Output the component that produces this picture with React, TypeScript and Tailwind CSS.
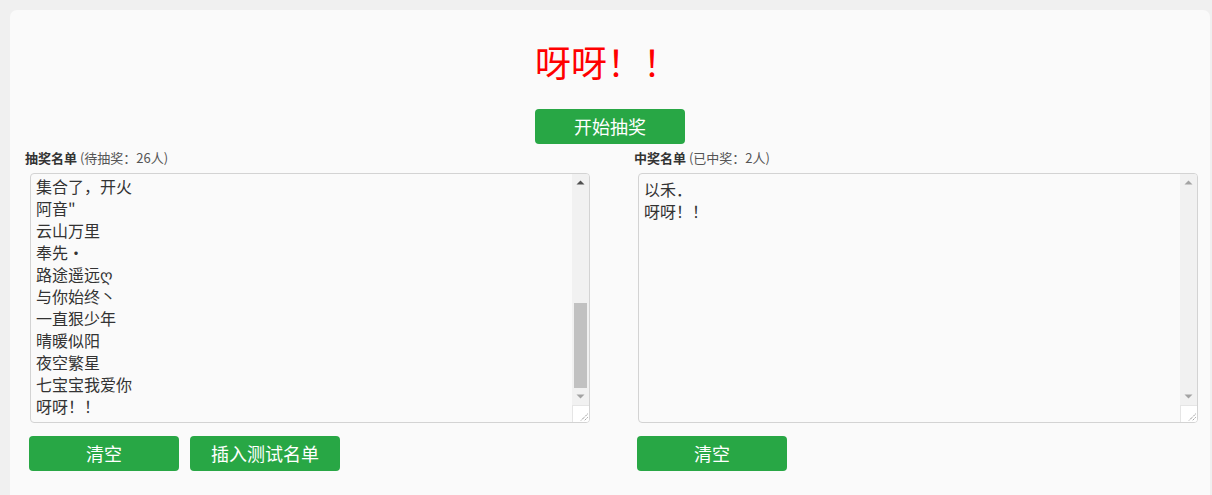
import React from "react";

const FONT = { fontFamily: '"Noto Sans CJK SC", "Noto Sans", sans-serif' };

const pool = [
  "集合了，开火",
  '阿音"',
  "云山万里",
  "奉先·",
  "路途遥远ღ",
  "与你始终丶",
  "一直狠少年",
  "晴暖似阳",
  "夜空繁星",
  "七宝宝我爱你",
  "呀呀！！",
];

const winners = ["以禾．", "呀呀！！"];

function Arrow({ up, dark }: { up: boolean; dark: boolean }) {
  return (
    <div className="h-[17px] flex items-center justify-center">
      <svg width="9" height="5" viewBox="0 0 9 5">
        {up ? (
          <polygon points="0.5,4.5 8.5,4.5 4.5,0.5" fill={dark ? "#505050" : "#a3a3a3"} />
        ) : (
          <polygon points="0.5,0.5 8.5,0.5 4.5,4.5" fill={dark ? "#505050" : "#a3a3a3"} />
        )}
      </svg>
    </div>
  );
}

function Resizer() {
  return (
    <div className="h-[17px] w-[17px] bg-white border-l border-t border-[#e5e5e5] relative">
      <svg width="17" height="17" viewBox="0 0 17 17" className="absolute -left-px -top-px">
        <line x1="15.5" y1="9" x2="9" y2="15.5" stroke="#6b6b6b" strokeWidth="1" strokeDasharray="1 1" />
        <line x1="15.5" y1="12.5" x2="12.5" y2="15.5" stroke="#6b6b6b" strokeWidth="1" strokeDasharray="1 1" />
      </svg>
    </div>
  );
}

function FakeTextarea({ lines, scrolled }: { lines: string[]; scrolled: boolean }) {
  return (
    <div className="w-[560px] h-[250px] border border-[#d3d3d3] rounded-[4px] bg-[#fafafa] flex overflow-hidden">
      <div
        className={
          "flex-1 flex flex-col overflow-hidden pl-[5px] text-[16px] leading-[22px] text-[#333] " +
          (scrolled ? "justify-end pb-[5px]" : "justify-start pt-[4px]")
        }
      >
        {lines.map((l, i) => (
          <div key={i} className="whitespace-nowrap shrink-0">
            {l}
          </div>
        ))}
      </div>
      <div className="w-[17px] flex flex-col bg-[#f1f1f1]">
        <Arrow up dark={scrolled} />
        <div className="flex-1 flex flex-col justify-end px-[2px]">
          {scrolled && <div className="h-[85px] bg-[#c1c1c1]" />}
        </div>
        <Arrow up={false} dark={false} />
        <Resizer />
      </div>
    </div>
  );
}

function GreenButton({ children }: { children: React.ReactNode }) {
  return (
    <button className="w-[150px] h-[35px] bg-[#28a745] text-white text-[18px] leading-[35px] rounded-[4px] text-center">
      {children}
    </button>
  );
}

export default function App() {
  return (
    <div className="min-h-[495px] bg-[#f0f0f0] pt-[10px] pl-[10px] pr-[2px]" style={FONT}>
      <div className="bg-[#fafafa] rounded-t-[7px] min-h-[485px] pl-[15px] pt-[30px]">
        <div className="text-center text-[36px] leading-[43px] text-[#ff0000] pr-[21px]">呀呀！！</div>
        <div className="flex justify-center mt-[26px] pr-[15px]">
          <GreenButton>开始抽奖</GreenButton>
        </div>
        <div className="grid grid-cols-[609px_1fr] mt-[5px]">
          <div>
            <div className="text-[13px] leading-[18px] text-[#333] whitespace-nowrap">
              <span className="font-bold">抽奖名单</span> <span className="text-[#555]">(待抽奖：26人)</span>
            </div>
            <div className="ml-[5px] mt-[6px]">
              <FakeTextarea lines={pool} scrolled />
            </div>
            <div className="flex gap-[11px] ml-[4px] mt-[13px]">
              <GreenButton>清空</GreenButton>
              <GreenButton>插入测试名单</GreenButton>
            </div>
          </div>
          <div>
            <div className="text-[13px] leading-[18px] text-[#333] whitespace-nowrap">
              <span className="font-bold">中奖名单</span> <span className="text-[#555]">(已中奖：2人)</span>
            </div>
            <div className="ml-[4px] mt-[6px]">
              <FakeTextarea lines={winners} scrolled={false} />
            </div>
            <div className="flex gap-[11px] ml-[3px] mt-[13px]">
              <GreenButton>清空</GreenButton>
            </div>
          </div>
        </div>
      </div>
    </div>
  );
}
